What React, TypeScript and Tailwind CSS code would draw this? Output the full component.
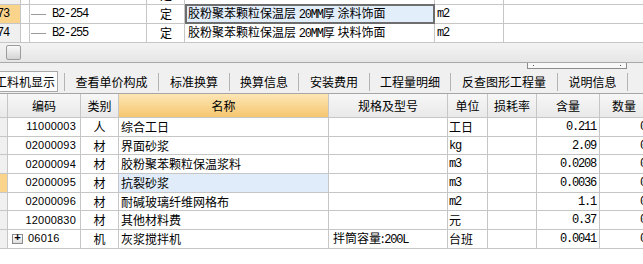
import React from "react";

const CJK = "font-['Noto_Sans_CJK_SC','Noto_Sans_CJK_JP',sans-serif]";
const MONO = "font-['Liberation_Mono',monospace]";
const MT = "font-['Liberation_Mono',monospace] text-[12px] tracking-[-1.2px]";
const SANS = "font-['Liberation_Sans',Arial,sans-serif]";

type TopRow = { hdr: string; hdrBg: string; code: string; type: string; name: React.ReactNode; unit: string; selected?: boolean };

const NameText = ({ b }: { b: string }) => (
  <span className={`${CJK} text-[12px] leading-none whitespace-nowrap`}>
    胶粉聚苯颗粒保温层 <span className={MT}>20MM</span>厚 {b}
  </span>
);

const topRows: TopRow[] = [
  { hdr: "72", hdrBg: "bg-[#f0f0f0]", code: "B2-253", type: "定", name: <NameText b="面砖饰面" />, unit: "" },
  { hdr: "73", hdrBg: "bg-[#fbd48c]", code: "B2-254", type: "定", name: <NameText b="涂料饰面" />, unit: "m2", selected: true },
  { hdr: "74", hdrBg: "bg-[#f0f0f0]", code: "B2-255", type: "定", name: <NameText b="块料饰面" />, unit: "m2" },
];

type Row = { code: string; cat: string; name: string; spec?: string; unit: string; unitMono?: boolean; qty: string; expand?: boolean; selected?: boolean };

const rows: Row[] = [
  { code: "11000003", cat: "人", name: "综合工日", unit: "工日", qty: "0.211" },
  { code: "02000093", cat: "材", name: "界面砂浆", unit: "kg", unitMono: true, qty: "2.09" },
  { code: "02000094", cat: "材", name: "胶粉聚苯颗粒保温浆料", unit: "m3", unitMono: true, qty: "0.0208" },
  { code: "02000095", cat: "材", name: "抗裂砂浆", unit: "m3", unitMono: true, qty: "0.0036", selected: true },
  { code: "02000096", cat: "材", name: "耐碱玻璃纤维网格布", unit: "m2", unitMono: true, qty: "1.1" },
  { code: "12000830", cat: "材", name: "其他材料费", unit: "元", qty: "0.37" },
  { code: "06016", cat: "机", name: "灰浆搅拌机", spec: "拌筒容量:", unit: "台班", qty: "0.0041", expand: true },
];

const tabs: { label: string; w: string }[] = [
  { label: "查看单价构成", w: "w-[94px]" },
  { label: "标准换算", w: "w-[71px]" },
  { label: "换算信息", w: "w-[69px]" },
  { label: "安装费用", w: "w-[71px]" },
  { label: "工程量明细", w: "w-[81px]" },
  { label: "反查图形工程量", w: "w-[107px]" },
  { label: "说明信息", w: "w-[70px]" },
];

const line = "border-[#c6c6c6]";

export default function App() {
  return (
    <div className="w-[643px] h-[264px] overflow-hidden bg-white text-black select-none">
      {/* top grid */}
      <div className="h-[43px] overflow-hidden bg-white">
        <div className="mt-[-14px]">
          {topRows.map((r) => (
            <div key={r.hdr} className={`flex h-[19px] border-b ${line}`}>
              <div className={`w-[21px] shrink-0 border-r ${line} ${r.hdrBg} overflow-hidden flex items-center`}>
                <span className={`${MT} ml-[-3px]`}>{r.hdr}</span>
              </div>
              <div className={`w-[9px] shrink-0 border-r ${line}`} />
              <div className={`w-[117px] shrink-0 border-r ${line} flex items-center`}>
                <div className="ml-[1px] w-[15px] h-px bg-[#9a9a9a]" />
                <span className={`${MT} ml-[6px]`}>{r.code}</span>
              </div>
              <div className={`w-[38px] shrink-0 border-r ${line} flex items-center pl-[13px]`}>
                <span className={`${CJK} text-[12px] leading-none`}>{r.type}</span>
              </div>
              <div
                className={`w-[250px] shrink-0 flex items-center overflow-hidden ${
                  r.selected ? "border-2 border-[#6e6e6e] bg-[#e3eefb] pl-[1px] mt-[-1px] h-[20px]" : `border-r ${line} pl-[3px]`
                }`}
              >
                {r.name}
              </div>
              <div className={`w-[69px] shrink-0 border-r ${line} flex items-center pl-[2px]`}>
                <span className={MT}>{r.unit}</span>
              </div>
              <div className="flex-1" />
            </div>
          ))}
        </div>
      </div>

      {/* horizontal scrollbar area */}
      <div className="h-[20px] bg-gradient-to-b from-[#f3f3f3] to-[#e6e6e6] border-b border-[#a9a9a9] flex items-center pl-[6px]">
        <div className="w-[15px] h-[15px] rounded-[2px] border border-[#9c9c9c] bg-gradient-to-b from-[#fafafa] to-[#d4d4d4]" />
      </div>

      {/* tab bar */}
      <div className="h-[31px] bg-[#f0f0f0] border-b border-[#a6a6a6] flex flex-col">
        <div className="h-[8px] pl-[527px]">
          <div className="w-[100px] h-[6px] border border-t-0 border-[#8c8c8c] bg-[#f8f8f8] flex items-center justify-between px-[5px]">
            <div className="w-[1px] h-[1px] bg-[#555]" />
            <div className="w-[1px] h-[1px] bg-[#555]" />
          </div>
        </div>
        <div className="flex items-center h-[21px]">
          <div className="w-[58px] h-[21px] border border-l-0 border-[#a8a8a8] bg-[#fbfbfb] flex items-center justify-end pr-[2px] overflow-hidden shrink-0">
            <span className={`${CJK} text-[12px] leading-none whitespace-nowrap`}>工料机显示</span>
          </div>
          <div className="w-[6px] shrink-0" />
          {tabs.map((t) => (
            <div key={t.label} className={`${t.w} shrink-0 h-[18px] border-l border-[#b4b4b4] flex items-center justify-center`}>
              <span className={`${CJK} text-[12px] leading-none whitespace-nowrap`}>{t.label}</span>
            </div>
          ))}
          <div className="h-[18px] border-l border-[#b4b4b4]" />
        </div>
      </div>

      {/* lower grid header */}
      <div className={`flex h-[24px] border-b ${line}`}>
        <div className={`w-[8px] shrink-0 border-r ${line} bg-gradient-to-b from-[#f7f7f7] to-[#e9e9e9]`} />
        {[
          { l: "编码", w: "w-[73px]" },
          { l: "类别", w: "w-[38px]" },
          { l: "名称", w: "w-[210px]", orange: true },
          { l: "规格及型号", w: "w-[119px]" },
          { l: "单位", w: "w-[40px]" },
          { l: "损耗率", w: "w-[49px]" },
          { l: "含量", w: "w-[63px]" },
          { l: "数量", w: "w-[49px]" },
        ].map((h) => (
          <div
            key={h.l}
            className={`${h.w} shrink-0 border-r ${line} flex items-center justify-center ${
              h.orange ? "bg-gradient-to-b from-[#fde6b4] to-[#f6c66f]" : "bg-gradient-to-b from-[#f7f7f7] to-[#e9e9e9]"
            }`}
          >
            <span className={`${CJK} text-[12px] leading-none whitespace-nowrap`}>{h.l}</span>
          </div>
        ))}
      </div>

      {/* lower grid rows */}
      {rows.map((r) => (
        <div key={r.code} className={`flex h-[18.7px] border-b ${line}`}>
          <div className={`w-[8px] shrink-0 border-r ${line} ${r.selected ? "bg-[#fbd48c]" : "bg-[#f0f0f0]"}`} />
          <div className={`w-[73px] shrink-0 border-r ${line} flex items-center ${r.expand ? "justify-start" : "justify-end pr-[4px]"}`}>
            {r.expand && (
              <div className="ml-[4px] mr-[5px] w-[11px] h-[10px] border border-[#8a8a8a] bg-gradient-to-b from-white to-[#dedede] flex items-center justify-center">
                <span className={`${MONO} text-[11px] leading-none font-bold mt-[-1px]`}>+</span>
              </div>
            )}
            <span className={`${SANS} text-[11px] leading-none tracking-[0.2px]`}>{r.code}</span>
          </div>
          <div className={`w-[38px] shrink-0 border-r ${line} flex items-center justify-center`}>
            <span className={`${CJK} text-[12px] leading-none`}>{r.cat}</span>
          </div>
          <div className={`w-[210px] shrink-0 border-r ${line} flex items-center pl-[2px] ${r.selected ? "bg-[#e1ecfa]" : ""}`}>
            <span className={`${CJK} text-[12px] leading-none whitespace-nowrap`}>{r.name}</span>
          </div>
          <div className={`w-[119px] shrink-0 border-r ${line} flex items-center pl-[4px]`}>
            {r.spec && (
              <span className={`${CJK} text-[12px] leading-none whitespace-nowrap`}>
                {r.spec}
                <span className={MT}>200L</span>
              </span>
            )}
          </div>
          <div className={`w-[40px] shrink-0 border-r ${line} flex items-center pl-[1px]`}>
            <span className={`${r.unitMono ? MT : `${CJK} text-[12px]`} leading-none whitespace-nowrap`}>{r.unit}</span>
          </div>
          <div className={`w-[49px] shrink-0 border-r ${line}`} />
          <div className={`w-[63px] shrink-0 border-r ${line} flex items-center justify-end pr-[3px]`}>
            <span className={`${MT} leading-none`}>{r.qty}</span>
          </div>
          <div className={`w-[49px] shrink-0 border-r ${line} flex items-center pl-[40px] overflow-hidden`}>
            <span className={`${MT} leading-none`}>0.0</span>
          </div>
        </div>
      ))}
    </div>
  );
}
